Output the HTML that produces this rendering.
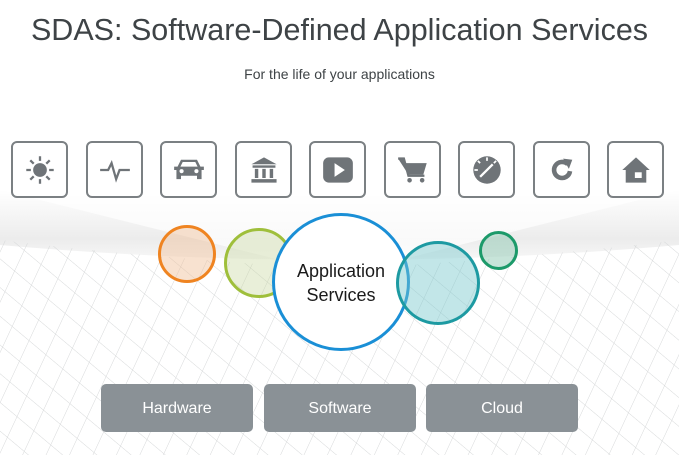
<!DOCTYPE html>
<html><head><meta charset="utf-8"><style>
body{margin:0;width:679px;height:455px;overflow:hidden;background:#fff;font-family:"Liberation Sans",sans-serif;position:relative}
h1{position:absolute;top:13px;left:0;width:679px;text-align:center;margin:0;font-weight:normal;font-size:30.5px;color:#3e4346}
.sub{position:absolute;top:66px;left:0;width:679px;text-align:center;font-size:14px;color:#3e4346}
.ic{position:absolute;top:141px;width:53px;height:53px;border:2px solid #7b8083;border-radius:6px;background:#fff}
.ic svg{position:absolute;left:11px;top:11px}
.btn{position:absolute;top:384px;width:152px;height:48px;background:#8a9196;border-radius:5px;color:#fff;font-size:16px;text-align:center;line-height:50px}
.c{position:absolute;border-radius:50%;box-sizing:border-box}
</style></head><body>
<svg width="679" height="455" style="position:absolute;left:0;top:0">
<defs>
<linearGradient id="g" x1="0" y1="0" x2="0" y2="1"><stop offset="0" stop-color="#fff"/><stop offset="0.7" stop-color="#ececec"/><stop offset="1" stop-color="#f7f7f7"/></linearGradient>
<pattern id="p" width="22" height="22" patternUnits="userSpaceOnUse" patternTransform="rotate(40) skewX(15)"><path d="M0 0H22M0 0V22" stroke="#d6d8d9" stroke-width="1" fill="none"/></pattern>
</defs>
<path d="M0 190 L679 190 L679 245 Q340 275 0 245Z" fill="url(#g)"/>
<path d="M0 190 L679 190 L400 260 L280 260Z" fill="#fff" opacity="0.7"/>
<path d="M0 240 Q120 255 340 270 Q560 255 679 240 L679 455 L0 455Z" fill="url(#p)"/>
</svg>
<h1>SDAS: Software-Defined Application Services</h1>
<div class="sub">For the life of your applications</div>

<div class="ic" style="left:11px"><svg width="32" height="32" viewBox="0 0 28 28"><circle cx="14" cy="14" r="6" fill="#6f7478"/><g stroke="#6f7478" stroke-width="2"><path d="M14 2v4M14 22v4M2 14h4M22 14h4M5.5 5.5l3 3M19.5 19.5l3 3M5.5 22.5l3-3M19.5 8.5l3-3"/></g></svg></div>
<div class="ic" style="left:86px"><svg width="32" height="32" viewBox="0 0 28 28"><path d="M1 14h7l3-6 4 14 3-8h9" stroke="#6f7478" stroke-width="2" fill="none"/></svg></div>
<div class="ic" style="left:160px"><svg width="32" height="32" viewBox="0 0 28 28"><path d="M1 11h3l3-6h14l3 6h3v3h-2v8h-4v-3H7v3H3v-8H1z" fill="#6f7478"/><path d="M8.5 7h11l2 4h-15z" fill="#fff"/><circle cx="7.5" cy="15" r="1.8" fill="#fff"/><circle cx="20.5" cy="15" r="1.8" fill="#fff"/></svg></div>
<div class="ic" style="left:235px"><svg width="32" height="32" viewBox="0 0 28 28"><path d="M14 3L25 9H3z M4 10h20v2H4z M6 13h3v8H6z M12.5 13h3v8h-3z M19 13h3v8h-3z M3 22h22v3H3z" fill="#6f7478"/></svg></div>
<div class="ic" style="left:309px"><svg width="32" height="32" viewBox="0 0 28 28"><rect x="1" y="3" width="26" height="22" rx="5" fill="#6f7478"/><path d="M11 8l9 6-9 6z" fill="#fff"/></svg></div>
<div class="ic" style="left:384px"><svg width="32" height="32" viewBox="0 0 28 28"><path d="M1 4h5l2 4h18l-3 10H10z" fill="#6f7478"/><path d="M1 4h5l4 15h14" stroke="#6f7478" stroke-width="2" fill="none"/><circle cx="11" cy="23" r="2" fill="#6f7478"/><circle cx="22" cy="23" r="2" fill="#6f7478"/></svg></div>
<div class="ic" style="left:458px"><svg width="32" height="32" viewBox="0 0 28 28"><circle cx="14" cy="14" r="12" fill="#6f7478"/><path d="M8 20l11-11" stroke="#fff" stroke-width="2"/><g stroke="#fff" stroke-width="1.5"><path d="M14 3v3M6 6l2 2M3 14h3M22 6l-2 2"/></g></svg></div>
<div class="ic" style="left:533px"><svg width="32" height="32" viewBox="0 0 28 28"><path d="M19 9A7 7 0 1 0 21 15" stroke="#6f7478" stroke-width="4" fill="none"/><path d="M15 4l8 1-3 8z" fill="#6f7478"/></svg></div>
<div class="ic" style="left:607px"><svg width="32" height="32" viewBox="0 0 28 28"><path d="M14 3L26 14h-3v11H5V14H2z" fill="#6f7478"/><rect x="13" y="16" width="6" height="5" fill="#fff"/></svg></div>

<div class="c" style="left:158px;top:225px;width:58px;height:58px;border:3px solid #ef8421;background:rgba(240,190,150,0.45)"></div>
<div class="c" style="left:224px;top:228px;width:70px;height:70px;border:3px solid #9fbf3b;background:rgba(200,215,160,0.4)"></div>
<div class="c" style="left:272px;top:213px;width:138px;height:138px;border:3px solid #1a8fd6;background:#fff"></div>
<div class="c" style="left:396px;top:241px;width:84px;height:84px;border:3px solid #1d9aa2;background:rgba(120,200,205,0.45)"></div>
<div class="c" style="left:479px;top:231px;width:39px;height:39px;border:3px solid #1c9a6a;background:rgba(130,195,170,0.45)"></div>
<div style="position:absolute;left:272px;top:259px;width:138px;text-align:center;font-size:18px;line-height:24px;color:#1a1a1a">Application<br>Services</div>

<div class="btn" style="left:101px">Hardware</div>
<div class="btn" style="left:264px">Software</div>
<div class="btn" style="left:426px">Cloud</div>
</body></html>
